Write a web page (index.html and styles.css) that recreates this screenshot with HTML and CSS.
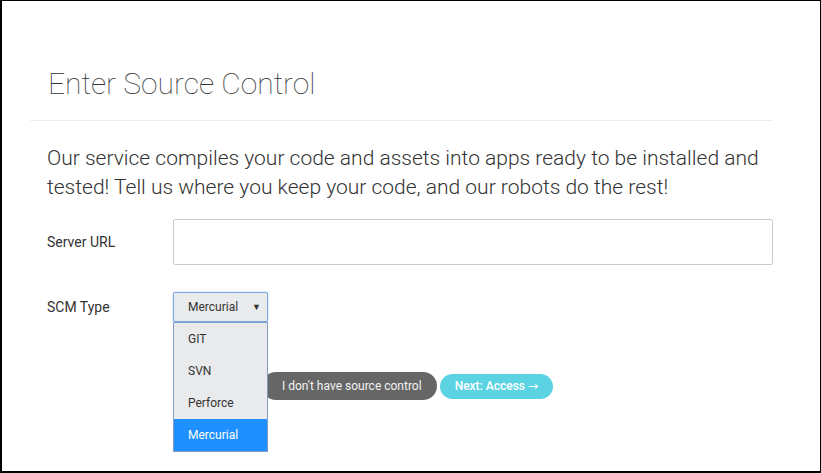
FILE: index.html
```html
<!DOCTYPE html>
<html>
<head>
<meta charset="utf-8">
<link rel="stylesheet" href="styles.css">
</head>
<body>
<div class="frame">
  <div class="container">
    <h1 class="title">Enter Source Control</h1>
    <hr class="rule">
    <p class="lead">Our service compiles your code and assets into apps ready to be installed and tested! Tell us where you keep your code, and our robots do the rest!</p>
    <div class="row row-url">
      <label class="label">Server URL</label>
      <div class="field"><div class="input"></div></div>
    </div>
    <div class="row row-scm">
      <label class="label">SCM Type</label>
      <div class="field">
        <div class="select-wrap">
          <div class="select"><span>Mercurial</span><span class="arrow">▼</span></div>
          <ul class="menu">
            <li class="opt">GIT</li>
            <li class="opt">SVN</li>
            <li class="opt">Perforce</li>
            <li class="opt active">Mercurial</li>
          </ul>
        </div>
      </div>
    </div>
    <div class="actions">
      <button class="btn btn-gray">I don't have source control</button>
      <button class="btn btn-cyan">Next: Access <span class="btn-arrow">→</span></button>
    </div>
  </div>
</div>
</body>
</html>
```

FILE: styles.css
```css
html, body {
  margin: 0;
  padding: 0;
  background: #fff;
}
body {
  font-family: Roboto, "Liberation Sans", sans-serif;
  color: #333;
}
.frame {
  width: 821px;
  height: 473px;
  box-sizing: border-box;
  border: 1px solid #000;
  border-left-width: 2px;
  border-bottom-width: 2px;
  overflow: hidden;
}
.container {
  padding: 0 47px 0 28px;
}
.title {
  margin: 66px 0 0 0;
  padding-left: 18px;
  font-size: 30px;
  line-height: 34px;
  font-weight: 100;
  color: #333;
}
.rule {
  margin: 19px 0 0 0;
  border: 0;
  border-top: 1px solid #eee;
  height: 0;
}
.lead {
  margin: 23px 0 0 0;
  padding-left: 17px;
  font-size: 21px;
  line-height: 29px;
  font-weight: 300;
  color: #333;
}
.row {
  display: flex;
  align-items: center;
}
.row-url {
  margin-top: 17px;
}
.row-scm {
  margin-top: 27px;
}
.label {
  width: 126px;
  padding-left: 17px;
  flex: none;
  font-size: 14px;
  color: #333;
}
.field {
  flex: 1;
}
.input {
  height: 44px;
  border: 1px solid #ccc;
  border-radius: 2px;
}
.select-wrap {
  position: relative;
  width: 95px;
}
.select {
  height: 28px;
  box-sizing: content-box;
  border: 1px solid #7aa7e6;
  border-radius: 2px;
  background: #eaebed;
  display: flex;
  align-items: center;
  justify-content: space-between;
  padding: 0 6px 0 14px;
  font-size: 12px;
  color: #333;
  box-shadow: 0 0 2px rgba(80, 140, 230, 0.5);
}
.arrow {
  font-size: 9px;
}
.menu {
  position: absolute;
  top: 30px;
  left: 0;
  width: 93px;
  margin: 0;
  padding: 0;
  list-style: none;
  background: #e9eaec;
  border: 1px solid #7f9bc6;
  z-index: 5;
}
.opt {
  height: 32px;
  line-height: 32px;
  padding-left: 14px;
  font-size: 12px;
  color: #333;
}
.opt.active {
  background: #1e90ff;
  color: #fff;
}
.actions {
  margin-top: 50px;
  padding-left: 232px;
  display: flex;
  align-items: center;
  gap: 3px;
}
.btn {
  font-family: Roboto, "Liberation Sans", sans-serif;
  font-size: 12px;
  border: 0;
  border-radius: 14px;
  cursor: pointer;
}
.btn-gray {
  height: 28px;
  padding: 0 15px 0 20px;
  background: #666;
  color: #f2f2f2;
}
.btn-cyan {
  height: 25px;
  padding: 0 15px;
  background: #5bd3e3;
  color: #fff;
  font-weight: 500;
}
.btn-arrow {
  font-family: "DejaVu Sans", sans-serif;
  font-weight: 400;
  font-size: 12px;
}
```
